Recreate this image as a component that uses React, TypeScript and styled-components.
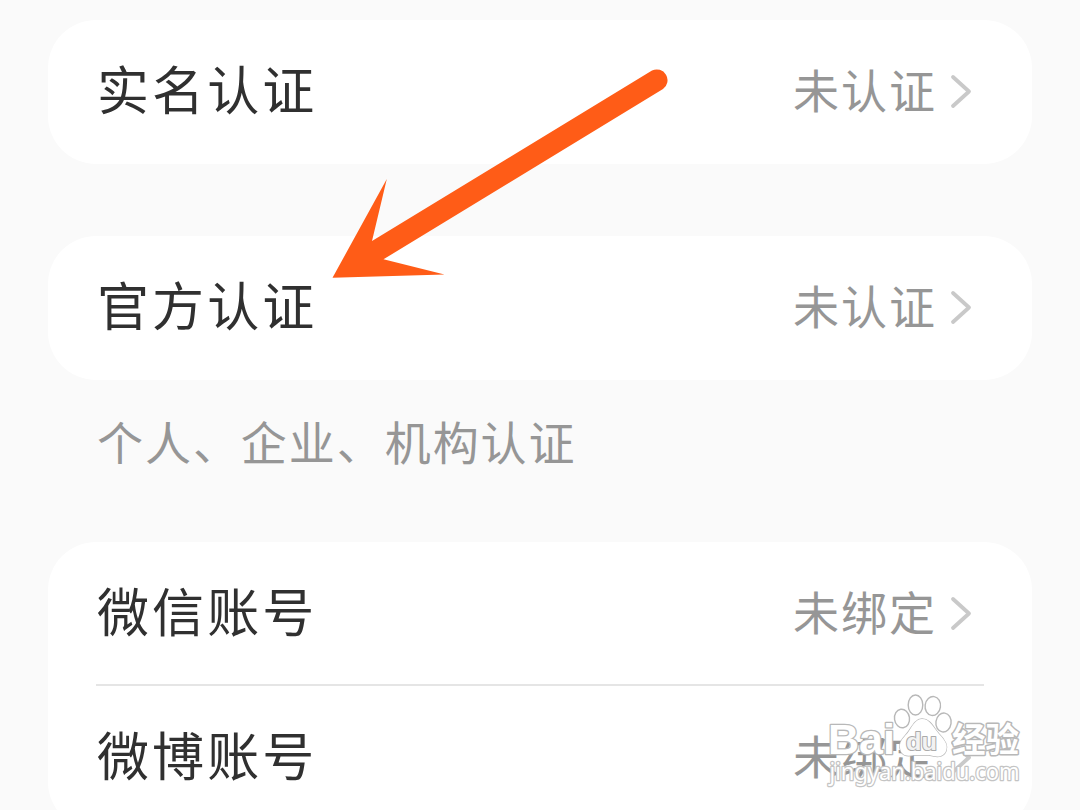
import React from "react";
import styled, { createGlobalStyle } from "styled-components";

const GlobalStyle = createGlobalStyle`
  html, body { margin: 0; height: 100%; overflow: hidden; background: #fafafa; }
  body { font-family: "Noto Sans CJK SC", "Noto Sans", sans-serif; }
`;

const Screen = styled.main`
  position: relative;
  box-sizing: border-box;
  width: 1080px;
  height: 810px;
  padding: 20px 48px 0;
  overflow: hidden;
  display: flex;
  flex-direction: column;
  background: #fafafa;
`;

const Card = styled.section<{ $gap?: number }>`
  flex: none;
  margin-top: ${(p) => p.$gap ?? 0}px;
  padding: 0 48px;
  border-radius: 48px;
  background: #fff;
`;

const RowBox = styled.div<{ $divided?: boolean }>`
  box-sizing: border-box;
  height: 144px;
  padding-top: ${(p) => (p.$divided ? 2 : 0)}px;
  padding-right: 11px;
  display: flex;
  align-items: center;
  border-bottom: ${(p) => (p.$divided ? "2px solid #e5e5e5" : "0")};
`;

const Label = styled.span`
  flex: 1;
  font-size: 52px;
  line-height: 76px;
  letter-spacing: 3.1px;
  color: #303030;
  padding-left: 1px;
  margin-top: -8px;
`;

const Status = styled.span`
  font-size: 46px;
  line-height: 68px;
  letter-spacing: 2px;
  color: #969696;
  margin: -8px 12px 0 0;
`;

const Caption = styled.p`
  margin: 26px 0 0 49px;
  height: 68px;
  font-size: 46px;
  line-height: 68px;
  letter-spacing: 1.95px;
  color: #969696;
`;

const Chevron = styled.svg`
  display: block;
  width: 24px;
  height: 40px;
  flex: none;
`;

const Overlay = styled.svg`
  position: absolute;
  left: 0;
  top: 0;
  pointer-events: none;
`;

type RowProps = { label: string; status: string; divided?: boolean };

const Row = ({ label, status, divided }: RowProps) => (
  <RowBox $divided={divided}>
    <Label>{label}</Label>
    <Status>{status}</Status>
    <Chevron viewBox="0 0 24 40" fill="none">
      <path d="M4 5 L20 19.5 L4 34" stroke="#c9c9c9" strokeWidth="3.8" strokeLinecap="round" strokeLinejoin="round" />
    </Chevron>
  </RowBox>
);

const Arrow = () => (
  <Overlay width="1080" height="810" viewBox="0 0 1080 810">
    <path
      d="M332.5 277.8 L386.8 179 L372 241 L652 70.5 A10.8 10.8 0 0 1 663 89 L383.5 259.3 L444.5 274.6 Z"
      fill="#ff5c17"
    />
  </Overlay>
);

const Watermark = () => (
  <Overlay width="1080" height="810" viewBox="0 0 1080 810" fill="#fff" stroke="#b8b8b8" strokeLinejoin="round">
    <g strokeWidth="1.4">
      <ellipse cx="902" cy="718.5" rx="7.5" ry="9.3" transform="rotate(-8 902 718.5)" />
      <ellipse cx="915.5" cy="705" rx="7.3" ry="10" />
      <ellipse cx="932.8" cy="706" rx="7.7" ry="9.5" transform="rotate(8 932.8 706)" />
      <ellipse cx="943.5" cy="722.5" rx="7.6" ry="9.5" transform="rotate(8 943.5 722.5)" />
    </g>
    <g fontFamily="Liberation Sans, sans-serif" paintOrder="stroke">
      <text x="828" y="753.5" fontSize="43" fontWeight="700" textLength="67" lengthAdjust="spacingAndGlyphs" strokeWidth="2.6">Bai</text>
      <path d="M922 719 C930 719 933 727 939 734 C946 741 948 746 946 751 C943 758 936 757 929 755 H914 C906 757 901 755 900 748 C899 740 905 737 909 731 C913 725 916 719 922 719 Z" strokeWidth="1.4" />
      <text x="906" y="750" fontSize="24" fontWeight="700" textLength="31" lengthAdjust="spacingAndGlyphs" fill="#f2f2f2" stroke="#ababab" strokeWidth="2">du</text>
    </g>
    <text
      x="952" y="752" fontSize="34" fontWeight="700" textLength="67" lengthAdjust="spacingAndGlyphs"
      fontFamily="Noto Sans CJK SC, sans-serif" paintOrder="stroke" strokeWidth="3"
    >经验</text>
    <text
      x="829.5" y="780" fontSize="23" textLength="190" lengthAdjust="spacingAndGlyphs"
      fontFamily="Noto Sans, sans-serif" paintOrder="stroke" strokeWidth="2.6" stroke="#c4c4c4"
    >jingyan.baidu.com</text>
  </Overlay>
);

export default function App() {
  return (
    <>
      <GlobalStyle />
      <Screen>
        <Card>
          <Row label="实名认证" status="未认证" />
        </Card>
        <Card $gap={72}>
          <Row label="官方认证" status="未认证" />
        </Card>
        <Caption>个人、企业、机构认证</Caption>
        <Card $gap={68}>
          <Row label="微信账号" status="未绑定" divided />
          <Row label="微博账号" status="未绑定" />
        </Card>
        <Arrow />
        <Watermark />
      </Screen>
    </>
  );
}
